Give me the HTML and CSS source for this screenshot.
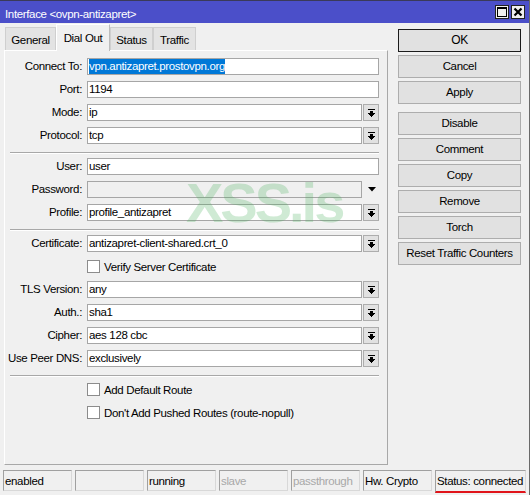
FILE: index.html
```html
<!DOCTYPE html>
<html>
<head>
<meta charset="utf-8">
<link rel="stylesheet" href="styles.css">
</head>
<body>
<div class="window">
  <div class="titlebar">
    <span class="title">Interface &lt;ovpn-antizapret&gt;</span>
    <div class="tb-buttons">
      <span class="tb-btn"><svg width="12" height="12" viewBox="0 0 12 12" shape-rendering="crispEdges"><rect x="1.5" y="1.5" width="9" height="9" fill="none" stroke="#000" stroke-width="1"/><rect x="1" y="1" width="10" height="2" fill="#000"/></svg></span>
      <span class="tb-btn"><svg width="12" height="12" viewBox="0 0 12 12"><path d="M2.5 2.5 L9.5 9.5 M9.5 2.5 L2.5 9.5" stroke="#000" stroke-width="2.2" fill="none"/></svg></span>
    </div>
  </div>
  <div class="main">
    <div class="left">
      <div class="tabs">
        <div class="tab t-general">General</div>
        <div class="tab active t-dial">Dial Out</div>
        <div class="tab t-status">Status</div>
        <div class="tab t-traffic">Traffic</div>
      </div>
      <div class="panel">
        <div class="row"><label>Connect To:</label><div class="field"><span class="sel">vpn.antizapret.prostovpn.org</span></div></div>
        <div class="row"><label>Port:</label><div class="field">1194</div></div>
        <div class="row"><label>Mode:</label><div class="field">ip</div><span class="dd"><svg width="7" height="8" viewBox="0 0 7 8" shape-rendering="crispEdges"><rect x="0" y="0" width="7" height="1"/><rect x="2" y="2" width="3" height="2"/><polygon points="0,4 7,4 3.5,7.6"/></svg></span></div>
        <div class="row"><label>Protocol:</label><div class="field">tcp</div><span class="dd"><svg width="7" height="8" viewBox="0 0 7 8" shape-rendering="crispEdges"><rect x="0" y="0" width="7" height="1"/><rect x="2" y="2" width="3" height="2"/><polygon points="0,4 7,4 3.5,7.6"/></svg></span></div>
        <div class="sep"></div>
        <div class="row"><label>User:</label><div class="field">user</div></div>
        <div class="row"><label>Password:</label><div class="field disabled"></div><span class="dd plain"><svg width="8" height="5" viewBox="0 0 8 5"><polygon points="0,0 8,0 4,4.5"/></svg></span></div>
        <div class="row"><label>Profile:</label><div class="field">profile_antizapret</div><span class="dd"><svg width="7" height="8" viewBox="0 0 7 8" shape-rendering="crispEdges"><rect x="0" y="0" width="7" height="1"/><rect x="2" y="2" width="3" height="2"/><polygon points="0,4 7,4 3.5,7.6"/></svg></span></div>
        <div class="sep"></div>
        <div class="row"><label>Certificate:</label><div class="field">antizapret-client-shared.crt_0</div><span class="dd"><svg width="7" height="8" viewBox="0 0 7 8" shape-rendering="crispEdges"><rect x="0" y="0" width="7" height="1"/><rect x="2" y="2" width="3" height="2"/><polygon points="0,4 7,4 3.5,7.6"/></svg></span></div>
        <div class="row check"><span class="box"></span><span>Verify Server Certificate</span></div>
        <div class="row"><label>TLS Version:</label><div class="field">any</div><span class="dd"><svg width="7" height="8" viewBox="0 0 7 8" shape-rendering="crispEdges"><rect x="0" y="0" width="7" height="1"/><rect x="2" y="2" width="3" height="2"/><polygon points="0,4 7,4 3.5,7.6"/></svg></span></div>
        <div class="row"><label>Auth.:</label><div class="field">sha1</div><span class="dd"><svg width="7" height="8" viewBox="0 0 7 8" shape-rendering="crispEdges"><rect x="0" y="0" width="7" height="1"/><rect x="2" y="2" width="3" height="2"/><polygon points="0,4 7,4 3.5,7.6"/></svg></span></div>
        <div class="row"><label>Cipher:</label><div class="field">aes 128 cbc</div><span class="dd"><svg width="7" height="8" viewBox="0 0 7 8" shape-rendering="crispEdges"><rect x="0" y="0" width="7" height="1"/><rect x="2" y="2" width="3" height="2"/><polygon points="0,4 7,4 3.5,7.6"/></svg></span></div>
        <div class="row"><label>Use Peer DNS:</label><div class="field">exclusively</div><span class="dd"><svg width="7" height="8" viewBox="0 0 7 8" shape-rendering="crispEdges"><rect x="0" y="0" width="7" height="1"/><rect x="2" y="2" width="3" height="2"/><polygon points="0,4 7,4 3.5,7.6"/></svg></span></div>
        <div class="sep"></div>
        <div class="row check"><span class="box"></span><span>Add Default Route</span></div>
        <div class="row check"><span class="box"></span><span>Don't Add Pushed Routes (route-nopull)</span></div>
      </div>
    </div>
    <div class="right">
      <div class="btn default">OK</div>
      <div class="btn">Cancel</div>
      <div class="btn">Apply</div>
      <div class="btn group">Disable</div>
      <div class="btn">Comment</div>
      <div class="btn">Copy</div>
      <div class="btn">Remove</div>
      <div class="btn">Torch</div>
      <div class="btn">Reset Traffic Counters</div>
    </div>
  </div>
  <div class="statusbar">
    <div class="cell">enabled</div>
    <div class="cell"></div>
    <div class="cell">running</div>
    <div class="cell dim">slave</div>
    <div class="cell dim">passthrough</div>
    <div class="cell">Hw. Crypto</div>
    <div class="cell last">Status: connected</div>
  </div>
  <div class="watermark">XSS.is</div>
</div>
</body>
</html>
```
FILE: styles.css
```css
* { box-sizing: border-box; }
html, body { margin: 0; padding: 0; }
body {
  font-family: "Liberation Sans", Arial, sans-serif;
  font-size: 11.5px;
  letter-spacing: -0.35px;
  color: #000;
  background: #f0f0f0;
}
.window {
  position: relative;
  width: 530px;
  height: 495px;
  background: #f0f0f0;
  border-right: 1px solid #6a6a6a;
  display: flex;
  flex-direction: column;
}
.titlebar {
  height: 23px;
  background: #4b4fc9;
  border-top: 1px solid #3a3a5a;
  display: flex;
  align-items: flex-start;
  justify-content: space-between;
}
.title {
  color: #fff;
  padding: 6px 0 0 5px;
  line-height: 14px;
}
.tb-buttons {
  display: flex;
  gap: 2px;
  padding: 4px 4px 0 0;
}
.tb-btn {
  width: 14px;
  height: 14px;
  background: #f0f0f0;
  border: 1px solid #222;
  display: flex;
  align-items: center;
  justify-content: center;
}
.main {
  display: flex;
  height: 442px;
}
.left {
  margin-left: 4px;
  width: 384px;
  display: flex;
  flex-direction: column;
}
.tabs {
  height: 27px;
  display: flex;
  align-items: flex-end;
  padding-top: 1px;
  position: relative;
  z-index: 1;
}
.tab {
  height: 23px;
  background: #e3e3e3;
  border: 1px solid #cfcfcf;
  border-bottom: none;
  line-height: 22px;
  padding-top: 1px;
  text-align: center;
}
.t-general { width: 51px; margin-left: 1px; }
.t-dial { width: 54px; }
.t-status { width: 43px; }
.t-traffic { width: 43px; }
.tab.active {
  height: 27px;
  background: #f0f0f0;
  border: 1px solid #ffffff;
  border-right-color: #bcbcbc;
  border-bottom: none;
  line-height: 24px;
  margin-bottom: -1px;
}
.panel {
  height: 415px;
  border: 1px solid #d6d6d6;
  border-top-color: #ffffff;
  border-left-color: #ffffff;
  border-right-color: #a8a8a8;
  border-bottom-color: #a8a8a8;
  padding: 7px 8px 0 0;
  display: flex;
  flex-direction: column;
}
.row {
  height: 17px;
  margin-bottom: 6px;
  display: flex;
  align-items: stretch;
}
.row label {
  width: 78px;
  text-align: right;
  padding-right: 1px;
  line-height: 17px;
  white-space: nowrap;
}
.field {
  flex: 1;
  margin-left: 4px;
  background: #fff;
  border: 1px solid #a6a6a6;
  line-height: 15px;
  padding-left: 1px;
  white-space: nowrap;
  overflow: hidden;
}
.field.disabled { background: #f0f0f0; }
.sel {
  background: #0078d7;
  color: #fff;
  display: inline-block;
  height: 15px;
}
.dd {
  width: 16px;
  margin-left: 1px;
  background: #e1e1e1;
  border: 1px solid #adadad;
  display: flex;
  align-items: center;
  justify-content: center;
}
.dd svg { fill: #000; }
.dd.plain {
  background: transparent;
  border-color: transparent;
  padding-left: 2px;
}
.sep {
  margin: 2px 0 4px 5px;
  height: 2px;
  border-top: 1px solid #a8a8a8;
  border-bottom: 1px solid #ffffff;
}
.row.check {
  padding-left: 82px;
  align-items: center;
}
.box {
  width: 13px;
  height: 13px;
  background: #fff;
  border: 1px solid #8c8c8c;
  margin-right: 4px;
}
.right {
  margin-left: 10px;
  width: 123px;
  padding-top: 6px;
  display: flex;
  flex-direction: column;
  gap: 3px;
}
.btn {
  height: 23px;
  background: #e1e1e1;
  border: 1px solid #adadad;
  text-align: center;
  line-height: 21px;
  white-space: nowrap;
}
.btn.default {
  border-color: #1c1c1c;
  font-size: 12px;
}
.btn.group { margin-top: 5px; }
.statusbar {
  margin-top: 5px;
  padding-left: 3px;
  display: flex;
  gap: 3px;
  height: 23px;
}
.cell {
  width: 69px;
  height: 21px;
  border: 1px solid #b8b8b8;
  border-top-color: #a0a0a0;
  border-left-color: #a0a0a0;
  border-bottom-color: #d8d8d8;
  border-right-color: #d8d8d8;
  line-height: 19px;
  padding: 1px 0 0 1px;
  white-space: nowrap;
  overflow: hidden;
}
.cell.dim { color: #a8a8a8; }
.cell.last {
  width: 91px;
  border-bottom: 2px solid #e0141a;
  height: 23px;
}
.watermark {
  position: absolute;
  left: 186px;
  top: 175px;
  font-family: "Liberation Sans", Arial, sans-serif;
  font-weight: bold;
  font-size: 56px;
  line-height: 56px;
  letter-spacing: -3px;
  color: rgba(70, 175, 90, 0.26);
  pointer-events: none;
}
```
